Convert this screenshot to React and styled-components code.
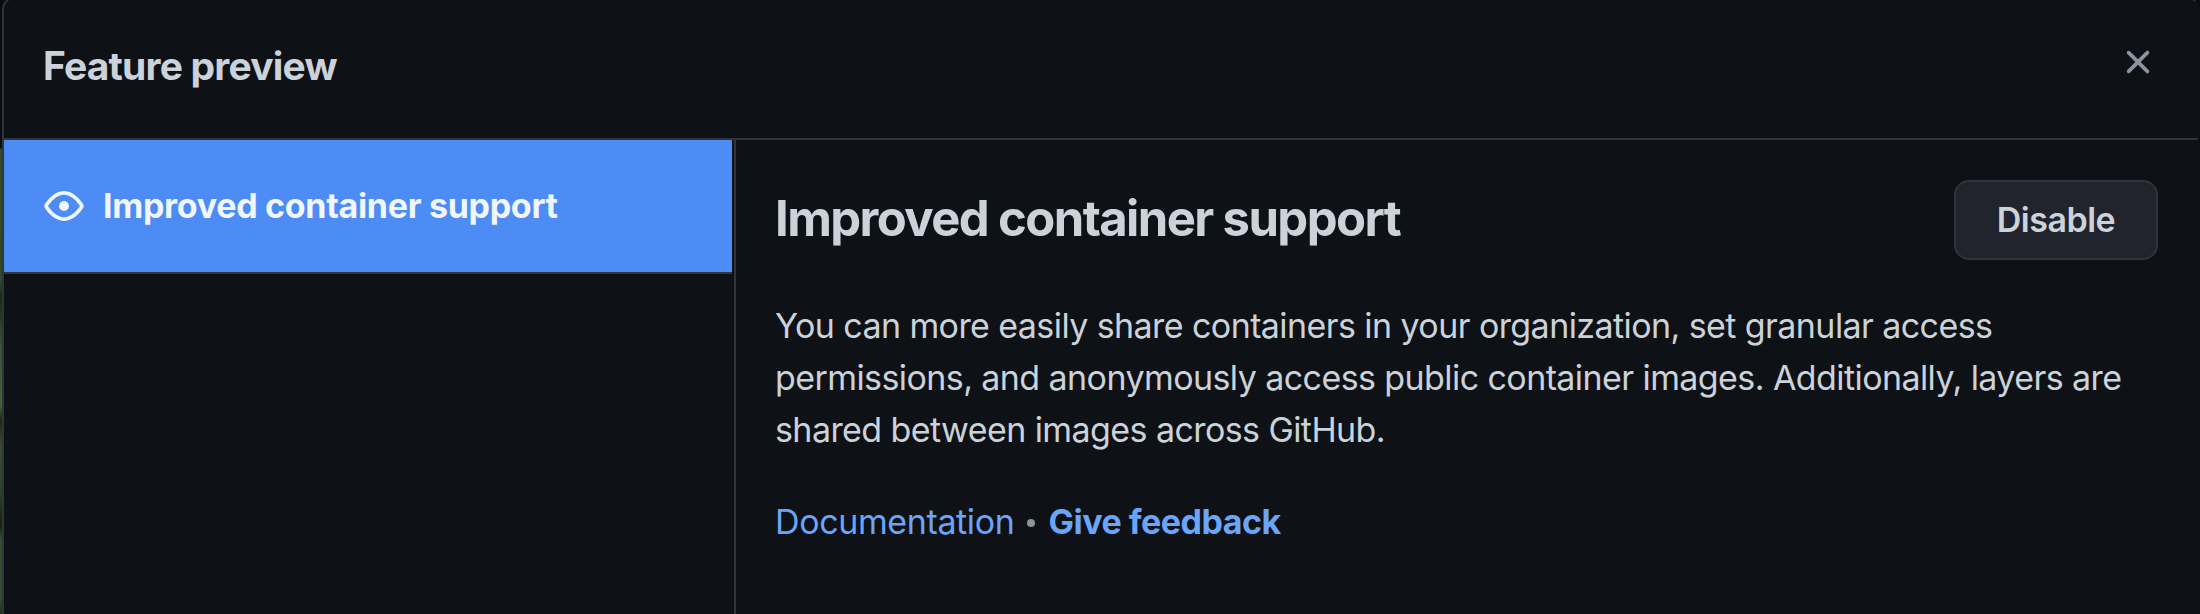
import React from 'react';
import styled, { createGlobalStyle } from 'styled-components';

const GlobalStyle = createGlobalStyle`
  * { box-sizing: border-box; }
  body {
    margin: 0;
    background: #0e1116;
    color: #cbd2da;
    font-family: Inter, "Liberation Sans", sans-serif;
    overflow: hidden;
  }
`;

const Page = styled.div`
  height: 614px;
  padding-left: 2px;
  overflow: hidden;
  background: linear-gradient(#0b0d12 0 148px, #2c4f29 149px, #2d4c28 280px, #1b2a1a 296px, #3b5535 350px, #456039 405px, #1a2917 420px, #3a4a2b 445px, #2d4527 490px, #14220f 524px, #32502c 540px, #2f4d2a 600px, #1c2f1a 614px);
`;

const Dialog = styled.section`
  height: 640px;
  margin-top: -4px;
  display: flex;
  flex-direction: column;
  background: #0e1116;
  border: 2px solid #30343b;
  border-right-color: #0e1116;
  border-radius: 14px;
`;

const Header = styled.header`
  flex: none;
  height: 142px;
  display: flex;
  justify-content: space-between;
  align-items: flex-start;
  padding: 44px 40px 0 39px;
  border-bottom: 2px solid #30343b;
`;

const DialogTitle = styled.h1`
  margin: 0;
  font-size: 39px;
  line-height: 48px;
  font-weight: 700;
  letter-spacing: -0.8px;
`;

const CloseButton = styled.button`
  display: flex;
  padding: 0;
  border: 0;
  background: none;
  color: #8d939e;
`;

const Icon = styled.svg`
  display: block;
  width: 40px;
  height: 40px;
  fill: currentColor;
`;

const Body = styled.div`
  flex: 1;
  display: flex;
`;

const Sidebar = styled.nav`
  flex: none;
  width: 732px;
  padding-right: 2px;
  border-right: 2px solid #30343b;
`;

const FeatureItem = styled.div`
  height: 134px;
  display: flex;
  align-items: center;
  gap: 19px;
  padding: 0 40px;
  background: #4d8cf5;
  border-bottom: 2px solid #30343b;
  color: #f0f6fc;
  font-size: 34px;
  font-weight: 700;
  line-height: 50px;
  letter-spacing: -0.3px;
`;

const Content = styled.main`
  flex: 1;
  padding: 40px 40px 40px 39px;
`;

const FeatureHeader = styled.div`
  display: flex;
  align-items: center;
  justify-content: space-between;
`;

const FeatureTitle = styled.h2`
  margin: -2px 0 0;
  font-size: 49px;
  line-height: 60px;
  font-weight: 700;
  letter-spacing: -1.6px;
`;

const Button = styled.button`
  width: 204px;
  height: 80px;
  padding: 0;
  border: 2px solid #30343b;
  border-radius: 15px;
  background: #21242c;
  color: #cbd2da;
  font: 600 34px/50px Inter, "Liberation Sans", sans-serif;
  letter-spacing: -0.5px;
`;

const Description = styled.p`
  margin: 40px 0;
  font-size: 34px;
  line-height: 52px;
  letter-spacing: -0.58px;
`;

const Links = styled.div`
  display: flex;
  align-items: center;
  gap: 13px;
  font-size: 34px;
  line-height: 52px;
  letter-spacing: -0.38px;
`;

const Link = styled.a`
  color: #6ba5f8;
  font-weight: ${(p) => (p.$strong ? 700 : 400)};
  letter-spacing: ${(p) => (p.$strong ? '-0.5px' : 'inherit')};
`;

const Separator = styled.span`
  width: 8px;
  height: 8px;
  margin-top: 2px;
  border-radius: 50%;
  background: #8b949e;
`;

export default function App() {
  return (
    <>
      <GlobalStyle />
      <Page>
        <Dialog>
          <Header>
            <DialogTitle>Feature preview</DialogTitle>
            <CloseButton aria-label="Close">
              <Icon viewBox="0 0 16 16">
                <path d="M3.72 3.72a.75.75 0 0 1 1.06 0L8 6.94l3.22-3.22a.75.75 0 1 1 1.06 1.06L9.06 8l3.22 3.22a.75.75 0 1 1-1.06 1.06L8 9.06l-3.22 3.22a.75.75 0 0 1-1.06-1.06L6.94 8 3.72 4.78a.75.75 0 0 1 0-1.06z" />
              </Icon>
            </CloseButton>
          </Header>
          <Body>
            <Sidebar>
              <FeatureItem>
                <Icon viewBox="0 0 16 16">
                  <path fillRule="evenodd" d="M1.679 7.932c.412-.621 1.242-1.75 2.366-2.717C5.175 4.242 6.527 3.5 8 3.5c1.473 0 2.824.742 3.955 1.715 1.124.967 1.954 2.096 2.366 2.717a.119.119 0 0 1 0 .136c-.412.621-1.242 1.75-2.366 2.717C10.825 11.758 9.473 12.5 8 12.5c-1.473 0-2.824-.742-3.955-1.715C2.92 9.818 2.09 8.69 1.679 8.068a.119.119 0 0 1 0-.136zM8 2c-1.981 0-3.67.992-4.933 2.078C1.797 5.169.88 6.423.43 7.1a1.619 1.619 0 0 0 0 1.798c.45.678 1.367 1.932 2.637 3.024C4.329 13.008 6.019 14 8 14c1.981 0 3.67-.992 4.933-2.078 1.27-1.091 2.187-2.345 2.637-3.023a1.619 1.619 0 0 0 0-1.798c-.45-.678-1.367-1.932-2.637-3.023C11.671 2.992 9.981 2 8 2zm0 8a2 2 0 1 0 0-4 2 2 0 0 0 0 4z" />
                </Icon>
                Improved container support
              </FeatureItem>
            </Sidebar>
            <Content>
              <FeatureHeader>
                <FeatureTitle>Improved container support</FeatureTitle>
                <Button>Disable</Button>
              </FeatureHeader>
              <Description>
                You can more easily share containers in your organization, set granular access
                permissions, and anonymously access public container images. Additionally, layers are
                shared between images across GitHub.
              </Description>
              <Links>
                <Link>Documentation</Link>
                <Separator />
                <Link $strong>Give feedback</Link>
              </Links>
            </Content>
          </Body>
        </Dialog>
      </Page>
    </>
  );
}
